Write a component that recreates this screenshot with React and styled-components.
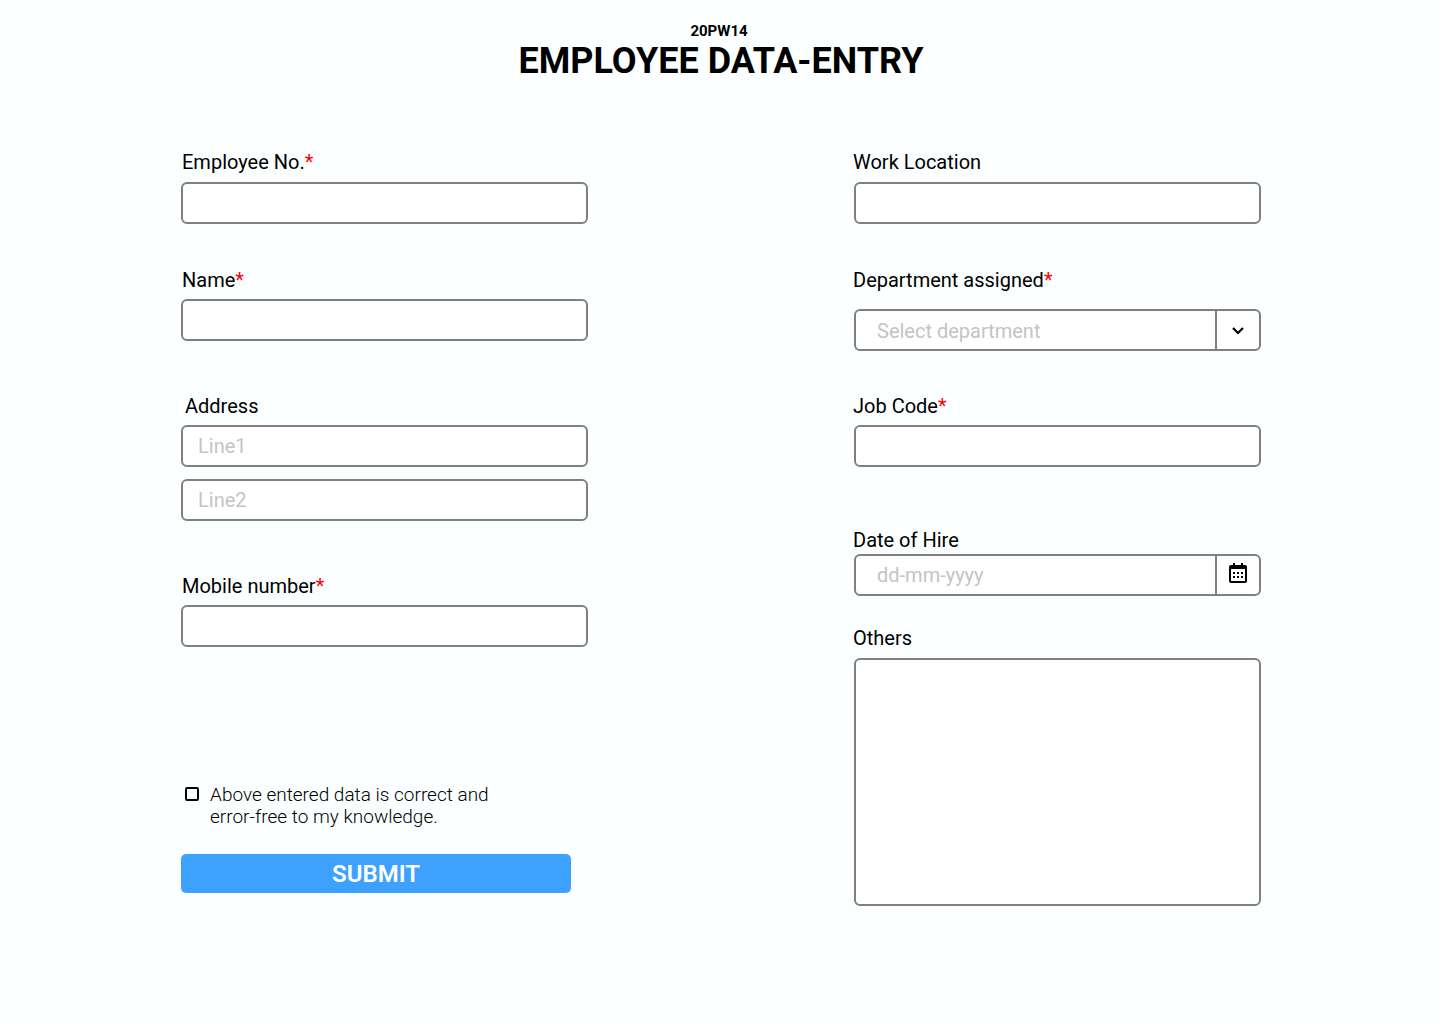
import React, { useState } from "react";
import styled, { createGlobalStyle } from "styled-components";

const GlobalStyle = createGlobalStyle`
  *, *::before, *::after { box-sizing: border-box; }
  body {
    margin: 0;
    background: #fcffff;
    color: #000;
    font-family: Roboto, "Liberation Sans", sans-serif;
  }
`;

const line = "2px solid #808080";

const Page = styled.main`
  padding: 22px 179px 117px 181px;

  @media (max-width: 1100px) {
    padding-inline: 40px;
  }
`;

const Header = styled.header`
  display: flex;
  flex-direction: column;
  align-items: center;
  text-align: center;
`;

const Code = styled.p`
  margin: 0;
  padding-right: 4px;
  font-size: 15px;
  line-height: 18px;
  font-weight: 700;
`;

const Title = styled.h1`
  margin: 0;
  font-size: 36px;
  line-height: 42px;
  font-weight: 700;
`;

const Form = styled.form`
  display: grid;
  grid-template-columns: 1fr 1fr;
  column-gap: 266px;
  margin-top: 68px;

  @media (max-width: 1100px) {
    column-gap: 60px;
  }
`;

const Column = styled.div`
  display: flex;
  flex-direction: column;
  --label-shift: ${(p) => p.$labelShift || "1px"};
`;

const Field = styled.div`
  display: flex;
  flex-direction: column;
  gap: ${(p) => p.$gap || 7}px;
  margin-top: ${(p) => p.$space || 0}px;
`;

const Label = styled.label`
  margin-left: var(--label-shift);
  font-size: 20px;
  line-height: 24px;
`;

const Required = styled.span`
  color: #ff0000;
`;

const Input = styled.input`
  width: 100%;
  height: 42px;
  padding: 0 15px;
  border: ${line};
  border-radius: 6px;
  background: #fff;
  font: inherit;
  font-size: 20px;

  &::placeholder { color: #c4c4c4; opacity: 1; }
`;

const TextArea = styled.textarea`
  display: block;
  width: 100%;
  height: 248px;
  padding: 8px 15px;
  border: ${line};
  border-radius: 6px;
  background: #fff;
  font: inherit;
  font-size: 20px;
  resize: none;
`;

const AddressGroup = styled.fieldset`
  min-width: 0;
  margin: 53px 0 0;
  padding: 0;
  border: 0;
`;

const Legend = styled.legend`
  padding: 0 4px;
  font-size: 20px;
  line-height: 24px;
`;

const AddressLines = styled.div`
  display: grid;
  gap: 12px;
  padding-top: 7px;
`;

const Combo = styled.div`
  display: grid;
  grid-template-columns: 1fr 44px;
  height: 42px;
  border: ${line};
  border-radius: 6px;
  background: #fff;
  overflow: hidden;
`;

const Select = styled.select`
  grid-area: 1 / 1 / 2 / 3;
  width: 100%;
  padding: 2px 64px 0 21px;
  border: 0;
  appearance: none;
  background: transparent;
  color: ${(p) => (p.$empty ? "#c4c4c4" : "#000")};
  font: inherit;
  font-size: 20px;
`;

const ComboIcon = styled.span`
  grid-area: 1 / 2;
  display: grid;
  place-items: center;
  border-left: ${line};
  pointer-events: none;
`;

const DateInput = styled.input`
  min-width: 0;
  padding: 0 21px;
  border: 0;
  background: transparent;
  font: inherit;
  font-size: 20px;

  &::placeholder { color: #c4c4c4; opacity: 1; }
`;

const DateButton = styled.button`
  display: grid;
  place-items: center;
  padding: 0 0 4px;
  border: 0;
  border-left: ${line};
  background: transparent;
  color: inherit;
  cursor: pointer;
`;

const Confirm = styled.label`
  display: flex;
  align-items: flex-start;
  gap: 11px;
  max-width: 330px;
  margin-top: 137px;
  padding-left: 4px;
  font-size: 19px;
  line-height: 22px;
  font-weight: 300;
`;

const Checkbox = styled.input`
  flex: none;
  width: 14px;
  height: 14px;
  margin: 3px 0;
  appearance: none;
  border: 2px solid #000;
  border-radius: 2px;

  &:checked { background: #3ea1ff; }
`;

const Submit = styled.button`
  width: 100%;
  max-width: 390px;
  height: 39px;
  margin-top: 26px;
  padding: 0;
  border: 0;
  border-radius: 5px;
  background: #3ea1ff;
  color: #fff;
  font: inherit;
  font-size: 24px;
  font-weight: 600;
  cursor: pointer;
`;

function ChevronIcon() {
  return (
    <svg width="12" height="10" viewBox="0 0 12 10" fill="none" aria-hidden="true">
      <path d="M1 3 6 8 11 3" stroke="#000" strokeWidth="2.2" />
    </svg>
  );
}

function CalendarIcon() {
  return (
    <svg width="18" height="20" viewBox="0 0 18 20" aria-hidden="true">
      <path
        fillRule="evenodd"
        d="M4 0h2v2h6V0h2v2h2a2 2 0 0 1 2 2v14a2 2 0 0 1-2 2H2a2 2 0 0 1-2-2V4a2 2 0 0 1 2-2h2zM2 6v12h14V6z"
      />
      <path d="M4 9h2v2H4zM8 9h2v2H8zM12 9h2v2h-2zM4 13h2v2H4zM8 13h2v2H8zM12 13h2v2h-2z" />
    </svg>
  );
}

function TextField({ id, label, required, space, gap }) {
  return (
    <Field $space={space} $gap={gap}>
      <Label htmlFor={id}>
        {label}
        {required && <Required>*</Required>}
      </Label>
      <Input id={id} name={id} type="text" required={required} />
    </Field>
  );
}

export default function App() {
  const [department, setDepartment] = useState("");

  return (
    <>
      <GlobalStyle />
      <Page>
        <Header>
          <Code>20PW14</Code>
          <Title>EMPLOYEE DATA-ENTRY</Title>
        </Header>
        <Form onSubmit={(e) => e.preventDefault()}>
          <Column>
            <TextField id="employee-no" label="Employee No." required gap={8} />
            <TextField id="name" label="Name" required space={44} />
            <AddressGroup>
              <Legend>Address</Legend>
              <AddressLines>
                <Input aria-label="Address line 1" placeholder="Line1" />
                <Input aria-label="Address line 2" placeholder="Line2" />
              </AddressLines>
            </AddressGroup>
            <TextField id="mobile" label="Mobile number" required space={53} />
            <Confirm>
              <Checkbox type="checkbox" name="confirm" />
              <span>Above entered data is correct and error-free to my knowledge.</span>
            </Confirm>
            <Submit type="submit">SUBMIT</Submit>
          </Column>
          <Column $labelShift="-1px">
            <TextField id="location" label="Work Location" gap={8} />
            <Field $space={44} $gap={17}>
              <Label htmlFor="department">
                Department assigned<Required>*</Required>
              </Label>
              <Combo>
                <Select
                  id="department"
                  required
                  value={department}
                  $empty={!department}
                  onChange={(e) => setDepartment(e.target.value)}
                >
                  <option value="" disabled>Select department</option>
                </Select>
                <ComboIcon><ChevronIcon /></ComboIcon>
              </Combo>
            </Field>
            <TextField id="job-code" label="Job Code" required space={43} />
            <Field $space={61} $gap={2}>
              <Label htmlFor="hire-date">Date of Hire</Label>
              <Combo>
                <DateInput id="hire-date" type="text" placeholder="dd-mm-yyyy" />
                <DateButton type="button" aria-label="Open calendar"><CalendarIcon /></DateButton>
              </Combo>
            </Field>
            <Field $space={30} $gap={8}>
              <Label htmlFor="others">Others</Label>
              <TextArea id="others" />
            </Field>
          </Column>
        </Form>
      </Page>
    </>
  );
}
